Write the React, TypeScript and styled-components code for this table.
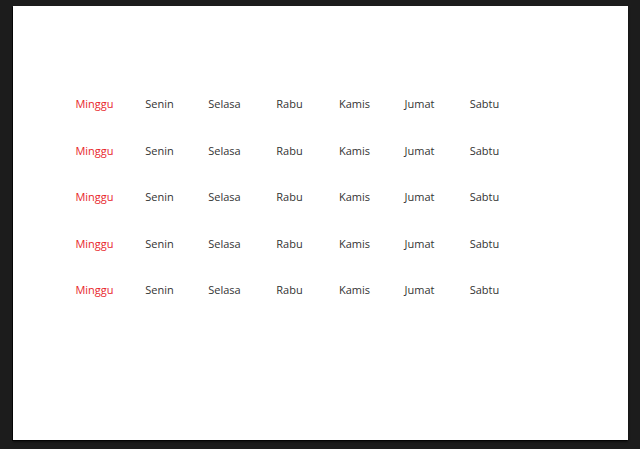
import styled, { createGlobalStyle } from 'styled-components'

const GlobalStyle = createGlobalStyle`
  html, body {
    margin: 0;
    padding: 0;
    background: #1c1c1c;
  }
  body {
    font-family: 'Open Sans', 'Noto Sans', sans-serif;
  }
`

const Stage = styled.div`
  width: 640px;
  height: 449px;
  padding: 6px 12px 0 13px;
  box-sizing: border-box;
`

const Sheet = styled.div`
  width: 615px;
  height: 434px;
  background: #ffffff;
  box-shadow: -1px 1px 0 #050505, 0 2px 2px rgba(0, 0, 0, 0.5);
  padding: 75px 0 0 49px;
  box-sizing: border-box;
`

const WeekTable = styled.div`
  display: grid;
  grid-template-columns: repeat(7, 65px);
  grid-auto-rows: 46.5px;
`

const DayCell = styled.div<{ $holiday: boolean }>`
  font-size: 11px;
  line-height: 46.5px;
  text-align: center;
  color: ${({ $holiday }) => ($holiday ? '#e8262b' : '#333333')};
`

const days = ['Minggu', 'Senin', 'Selasa', 'Rabu', 'Kamis', 'Jumat', 'Sabtu']
const rows = [0, 1, 2, 3, 4]

export default function App() {
  return (
    <>
      <GlobalStyle />
      <Stage>
        <Sheet>
          <WeekTable>
            {rows.map((r) =>
              days.map((d, i) => (
                <DayCell key={`${r}-${d}`} $holiday={i === 0}>
                  {d}
                </DayCell>
              )),
            )}
          </WeekTable>
        </Sheet>
      </Stage>
    </>
  )
}
